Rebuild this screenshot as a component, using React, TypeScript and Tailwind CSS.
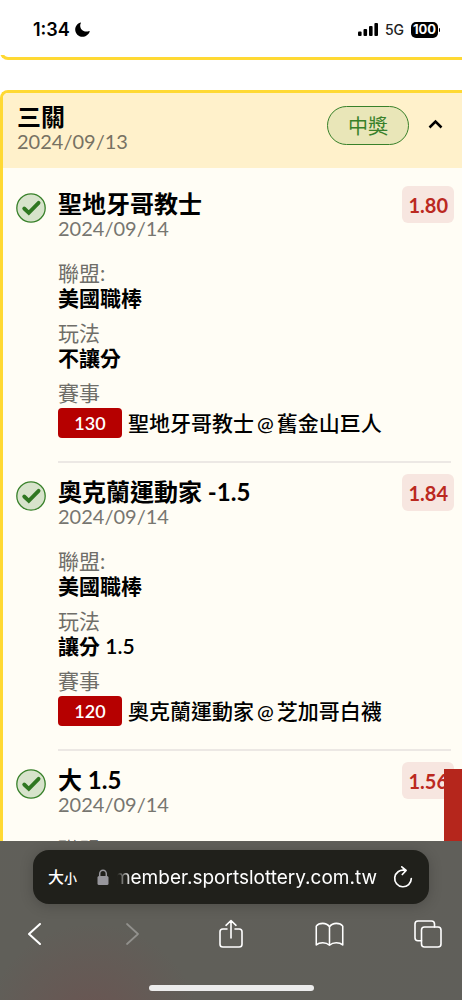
interface Pick {
  title: string;
  date: string;
  league: string;
  play: string;
  code: string;
  away: string;
  home: string;
  odds: string;
}

const picks: Pick[] = [
  {
    title: '聖地牙哥教士',
    date: '2024/09/14',
    league: '美國職棒',
    play: '不讓分',
    code: '130',
    away: '聖地牙哥教士',
    home: '舊金山巨人',
    odds: '1.80',
  },
  {
    title: '奧克蘭運動家 -1.5',
    date: '2024/09/14',
    league: '美國職棒',
    play: '讓分 1.5',
    code: '120',
    away: '奧克蘭運動家',
    home: '芝加哥白襪',
    odds: '1.84',
  },
  {
    title: '大 1.5',
    date: '2024/09/14',
    league: '美國職棒',
    play: '大小',
    code: '120',
    away: '奧克蘭運動家',
    home: '芝加哥白襪',
    odds: '1.56',
  },
];

const StatusBar = () => (
  <header className="flex h-[55px] shrink-0 items-center justify-between bg-white pt-1 pl-[33px] pr-[22px] font-['Inter',sans-serif]">
    <div className="flex items-center gap-[5px]">
      <span className="text-[18px] leading-6 font-semibold">1:34</span>
      <svg width="15" height="15" viewBox="0 0 15 15" aria-hidden="true">
        <path d="M5.500.4C2.400 1.400.2 4.200.2 7.500c0 4.100 3.200 7.300 7.200 7.300 3.300 0 6.200-2.100 7.300-5.300.1-.4-.2-.6-.5-.5-1 .4-2 .6-3 .6-3.500 0-6-2.500-6-6 0-1 .2-1.800.7-2.700.2-.3 0-.6-.4-.5z" fill="#000" />
      </svg>
    </div>
    <div className="flex items-center gap-[7px]">
      <svg width="20" height="13" viewBox="0 0 20 13" aria-hidden="true">
        <rect x="0" y="8.500" width="3.600" height="4.500" rx="1" />
        <rect x="5.500" y="6" width="3.600" height="7" rx="1" />
        <rect x="11" y="3" width="3.600" height="10" rx="1" />
        <rect x="16.400" y="0" width="3.600" height="13" rx="1" />
      </svg>
      <span className="text-[14px] leading-5 font-medium text-[#222]">5G</span>
      <div className="flex items-center gap-px">
        <span className="flex h-4 w-[27px] items-center justify-center rounded-[5px] bg-black text-[13px] font-bold text-white">100</span>
        <span className="h-1 w-px rounded-r bg-black" />
      </div>
    </div>
  </header>
);

const CheckBadge = () => (
  <svg width="30" height="30" viewBox="0 0 30 30" className="mt-[18px] shrink-0" aria-hidden="true">
    <circle cx="15" cy="15" r="14.200" fill="#d7e3cb" stroke="#38812a" strokeWidth="1.300" />
    <path d="M8.200 15.500l4.600 4.300 9.800-10" fill="none" stroke="#2f7721" strokeWidth="3.800" strokeLinecap="round" strokeLinejoin="miter" />
  </svg>
);

const Field = ({ label, value }: { label: string; value: string }) => (
  <div className="mb-2.5 leading-[25px]">
    <dt className="text-[#6f6e69]">{label}</dt>
    <dd className="font-semibold">{value}</dd>
  </div>
);

const PickRow = ({ pick }: { pick: Pick }) => (
  <li className="flex gap-3 pr-[11px] pl-[13px]">
    <CheckBadge />
    <div className="min-w-0 flex-1 border-b-2 border-[#ece8e4] pt-[17px] pb-[23px]">
      <div className="flex items-start justify-between">
        <div>
          <h3 className="text-[24px] leading-6 font-bold">{pick.title}</h3>
          <p className="text-[20px] leading-6 text-[#777670]">{pick.date}</p>
        </div>
        <span className="-mt-1.5 -mr-[3px] flex h-[37px] items-center rounded-md bg-[#f7e6e0] px-1.5 text-[20px] font-bold text-[#bb291f]">
          {pick.odds}
        </span>
      </div>
      <dl className="mt-5 text-[21px]">
        <Field label="聯盟:" value={pick.league} />
        <Field label="玩法" value={pick.play} />
        <div className="leading-[25px]">
          <dt className="text-[#6f6e69]">賽事</dt>
          <dd className="mt-[3px] flex items-center gap-1.5 leading-[30px] whitespace-nowrap">
            <span className="w-16 rounded-sm bg-[#b60000] text-center text-[18px] font-semibold text-white">{pick.code}</span>
            <span className="flex gap-[3px] font-medium">
              <span>{pick.away}</span>
              <span className="text-[20px]">@</span>
              <span>{pick.home}</span>
            </span>
          </dd>
        </div>
      </dl>
    </div>
  </li>
);

const BrowserBar = () => (
  <footer className="h-[159px] shrink-0 bg-[radial-gradient(circle_at_20%_120%,#6b5451_0%,#605f59_26%,#605f5a_100%)] pt-[9px] font-['Inter','Noto_Sans_CJK_TC',sans-serif] text-white">
    <div className="mx-[33px] flex h-[54px] items-center rounded-2xl bg-[#20201b] pr-4 pl-[15px] shadow-[0_2px_14px_rgba(0,0,0,0.2)]">
      <button className="flex shrink-0 items-baseline leading-7 font-['Noto_Sans_CJK_TC',sans-serif]" aria-label="大小">
        <span className="text-[16px] font-medium">大</span>
        <span className="text-[13px] font-medium">小</span>
      </button>
      <svg width="12" height="17" viewBox="0 0 12 17" className="mr-2 ml-5 shrink-0" aria-hidden="true">
        <rect x="0.500" y="7" width="11" height="9" rx="1.500" fill="#97969c" />
        <path d="M2.700 8V4.800a3.300 3.600 0 0 1 6.600 0V8" fill="none" stroke="#97969c" strokeWidth="1.500" />
      </svg>
      <button className="flex min-w-0 flex-1 justify-end overflow-hidden pt-0.5 text-[19px] leading-7 mask-[linear-gradient(to_right,transparent,black_14px)]">
        <span>member.sportslottery.com.tw</span>
      </button>
      <button className="ml-4 shrink-0" aria-label="重新載入">
        <svg width="20" height="24" viewBox="0 0 20 24" fill="none" stroke="#fff" strokeWidth="1.700" strokeLinecap="round" strokeLinejoin="round">
          <path d="M11.500 5.300A8.300 8.300 0 1 0 18.300 13.500M8.800 1.800l4.300 3.700-3.800 4" />
        </svg>
      </button>
    </div>
    <nav className="flex h-[60px] items-center justify-between px-2.5">
      <button className="flex w-12 justify-center" aria-label="上一頁">
        <svg width="13" height="22" viewBox="0 0 13 22" fill="none" stroke="#fff" strokeWidth="2" strokeLinecap="round" strokeLinejoin="round">
          <path d="M12 1L1 11l11 10" />
        </svg>
      </button>
      <button className="flex w-12 justify-center" aria-label="下一頁" disabled>
        <svg width="13" height="22" viewBox="0 0 13 22" fill="none" stroke="#92918d" strokeWidth="1.700" strokeLinecap="round" strokeLinejoin="round">
          <path d="M1 1l11 10L1 21" />
        </svg>
      </button>
      <button className="flex w-12 justify-center" aria-label="分享">
        <svg width="24" height="30" viewBox="0 0 24 30" fill="none" stroke="#fff" strokeWidth="1.600" strokeLinecap="round" strokeLinejoin="round">
          <path d="M8 10H3.800A2.800 2.800 0 0 0 1 12.800v12.400A2.800 2.800 0 0 0 3.800 28h16.400a2.800 2.800 0 0 0 2.800-2.800V12.800a2.800 2.800 0 0 0-2.800-2.800H16M12 19V1.500M7 6.300l5-4.800 5 4.800" />
        </svg>
      </button>
      <button className="flex w-12 justify-center" aria-label="書籤">
        <svg width="29" height="25" viewBox="0 0 30 25" fill="none" stroke="#fff" strokeWidth="1.600" strokeLinecap="round" strokeLinejoin="round">
          <path d="M15 4.500C13.200 2 10.700 1 8 1 5 1 2.500 2.200 1.300 3.800v19.500C3 21.800 5.300 21 8 21s5.200.900 7 2.600c1.800-1.700 4.300-2.600 7-2.600s5 .8 6.700 2.300V3.800C27.500 2.200 25 1 22 1c-2.700 0-5.200 1-7 3.500zM15 4.500v19" />
        </svg>
      </button>
      <button className="flex w-12 justify-center" aria-label="分頁">
        <svg width="28" height="28" viewBox="0 0 28 28" fill="none" stroke="#fff" strokeWidth="1.600" strokeLinecap="round" strokeLinejoin="round">
          <rect x="7.500" y="7" width="19.500" height="20" rx="3" />
          <path d="M7.500 20.700H4a3 3 0 0 1-3-3V4a3 3 0 0 1 3-3h13.500a3 3 0 0 1 3 3v3" />
        </svg>
      </button>
    </nav>
    <div className="mx-auto mt-[21px] h-1.5 w-[165px] rounded-full bg-[#ececec]" />
  </footer>
);

export default function App() {
  return (
    <div className="flex h-screen flex-col overflow-hidden bg-white font-['Lato','Noto_Sans_CJK_TC',sans-serif] text-black">
      <StatusBar />
      <main className="relative min-h-0 flex-1 overflow-hidden">
        <div className="-mt-2 mb-[30px] h-[13px] rounded-bl-lg border-b-[3px] border-l-[3px] border-[#ffd933]" />
        <section className="overflow-hidden rounded-tl-lg border-t-[3px] border-l-[3px] border-[#ffd933] bg-[#fffdf5]">
          <div className="flex h-[75px] items-start bg-[#fff1cb] pt-3 pr-[19px] pl-3.5">
            <div className="flex-1">
              <h2 className="text-[24px] leading-6 font-bold">三關</h2>
              <p className="text-[20px] leading-6 text-[#777263]">2024/09/13</p>
            </div>
            <div className="flex items-center gap-[19px] pt-px">
              <span className="flex h-[39px] w-[82px] items-center justify-center rounded-full border border-[#38812a] bg-[#e9e6b8] text-[20px] text-[#38812a]">
                中獎
              </span>
              <button className="pb-1" aria-label="收合">
                <svg width="15" height="10" viewBox="0 0 15 10" fill="none" stroke="#000" strokeWidth="2.500">
                  <path d="M1.500 8.500l6-6 6 6" />
                </svg>
              </button>
            </div>
          </div>
          <ul className="pt-[7px]">
            {picks.map((pick, i) => (
              <PickRow key={i} pick={pick} />
            ))}
          </ul>
        </section>
        <div className="absolute right-0 bottom-0 h-[72px] w-[18px] bg-[#b5261c]" />
      </main>
      <BrowserBar />
    </div>
  );
}
